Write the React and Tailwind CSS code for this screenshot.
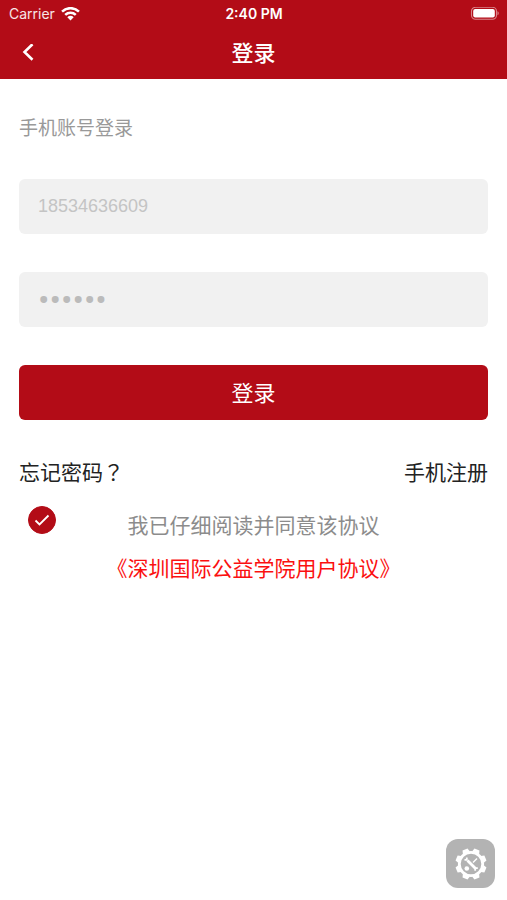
import { useState } from "react";

function StatusBar() {
    return (
        <div className="grid grid-cols-3 items-center h-7 pl-[9px] pr-2">
            <div className="flex items-center gap-1.5">
                <span className="font-['Inter','Liberation_Sans',sans-serif] text-[14px] leading-5 text-white/90">Carrier</span>
                <svg className="w-[19px] h-[15px]" viewBox="0 0 18 14" fill="none" stroke="white" strokeWidth="2.4">
                    <path d="M1 4.2a11.6 11.6 0 0 1 16 0" />
                    <path d="M4 7.4a7.2 7.2 0 0 1 10 0" />
                    <path d="M9 12.6 6 9.5a4.3 4.3 0 0 1 6 0z" fill="white" stroke="none" />
                </svg>
            </div>
            <span className="text-center font-['Inter','Liberation_Sans',sans-serif] text-[14px] leading-5 font-semibold text-white">2:40 PM</span>
            <svg className="justify-self-end w-[30px] h-[14px]" viewBox="0 0 30 14">
                <rect x="2.5" y="0.3" width="25" height="12" rx="4" fill="none" stroke="white" strokeOpacity="0.5" strokeWidth="1.1" />
                <rect x="4.2" y="2" width="21.6" height="8.6" rx="2" fill="white" />
                <path d="M28.5 4.3v4c1.6-.6 1.6-3.4 0-4z" fill="white" fillOpacity="0.5" />
            </svg>
        </div>
    );
}

function ToolIcon() {
    return (
        <svg className="w-[34px] h-[34px]" viewBox="-17 -17 34 34" fill="none" stroke="white">
            <circle r="11.7" strokeWidth="2.8" />
            <g fill="white" stroke="none">
                {[22.5, 67.5, 112.5, 157.5, 202.5, 247.5, 292.5, 337.5].map((deg) => (
                    <path key={deg} d="M-3.8-12 -2.7-15.6h5.4L3.8-12z" transform={`rotate(${deg})`} />
                ))}
            </g>
            <path d="M-3.5-3.5 4.5 4.5" strokeWidth="2.8" />
            <path d="M-6.5-4.2-4.2-4.2-4.2-6.5M4.2 6.8 4.2 4.2 6.8 4.2" strokeWidth="1.8" />
            <path d="M2-1.6 6-5.6" strokeWidth="1.4" />
            <circle cx="-4.2" cy="4.5" r="2.3" fill="white" stroke="none" />
        </svg>
    );
}

export default function App() {
    const [phone, setPhone] = useState("");
    const [password, setPassword] = useState("123456");
    const [agreed, setAgreed] = useState(true);

    const handleSubmit = (e) => {
        e.preventDefault();
    };

    return (
        <div className="relative min-h-screen bg-white font-['Liberation_Sans','Noto_Sans_CJK_SC',sans-serif]">
            <header className="bg-[#b30c17]">
                <StatusBar />
                <div className="grid grid-cols-3 items-center h-[51px] px-5">
                    <button type="button" aria-label="返回" className="justify-self-start flex items-center w-6 h-8 cursor-pointer">
                        <svg className="w-4 h-5" viewBox="0 0 16 20" fill="none" stroke="white" strokeWidth="2.6">
                            <path d="M12.5 0.2 4.5 8l8 7.8" />
                        </svg>
                    </button>
                    <h1 className="text-center text-[22px] leading-8 font-medium text-white">登录</h1>
                </div>
            </header>

            <main className="px-[19px] pt-[34px]">
                <h2 className="text-[19px] leading-8 text-[#999999]">手机账号登录</h2>

                {/* Login form */}
                <form onSubmit={handleSubmit} className="flex flex-col gap-[38px] mt-[34px]">
                    <input
                        type="tel"
                        aria-label="手机号"
                        value={phone}
                        onChange={(e) => setPhone(e.target.value)}
                        placeholder="18534636609"
                        className="w-full h-[55px] px-[19px] rounded-md bg-[#f1f1f1] text-[18px] text-[#333333] placeholder-[#c4c4c4] outline-none"
                    />
                    <input
                        type="password"
                        aria-label="密码"
                        value={password}
                        onChange={(e) => setPassword(e.target.value)}
                        className="w-full h-[55px] px-[19px] rounded-md bg-[#f1f1f1] font-[Roboto,sans-serif] text-[34px] text-[#bbbbbb] outline-none"
                    />
                    <button type="submit" className="w-full h-[55px] pt-0.5 rounded-md bg-[#b30c17] text-[22px] text-white cursor-pointer">
                        登录
                    </button>
                </form>

                <div className="flex items-center justify-between mt-[37px] text-[21px] leading-8 text-[#222222]">
                    <a href="#forgot">
                        忘记密码<span className="font-['Noto_Sans_CJK_TC',sans-serif] leading-none" lang="zh-TW">？</span>
                    </a>
                    <a href="#register">手机注册</a>
                </div>

                <div className="grid grid-cols-[28px_1fr_28px] items-start px-[9px] mt-[17px]">
                    <span className="relative flex w-7 h-7">
                        <input
                            id="agree"
                            type="checkbox"
                            checked={agreed}
                            onChange={(e) => setAgreed(e.target.checked)}
                            className="peer appearance-none w-7 h-7 rounded-full border border-[#b30c17] checked:bg-[#b30c17] cursor-pointer"
                        />
                        <svg className="absolute inset-0 w-7 h-7 pointer-events-none opacity-0 peer-checked:opacity-100" viewBox="0 0 28 28" fill="none" stroke="white" strokeWidth="1.8">
                            <path d="M7.5 14.5l4 4L20.5 9.5" />
                        </svg>
                    </span>
                    <label htmlFor="agree" className="pt-1 text-center text-[21px] leading-8 text-[#8c8c8c] cursor-pointer">我已仔细阅读并同意该协议</label>
                </div>
                <a href="#agreement" className="block mt-[11px] text-center text-[21px] leading-8 text-[#fb1010]">《深圳国际公益学院用户协议》</a>
            </main>

            <button type="button" aria-label="工具" className="fixed right-3 bottom-3 flex items-center justify-center w-[49px] h-[49px] rounded-xl bg-[#b3b3b3] cursor-pointer">
                <ToolIcon />
            </button>
        </div>
    );
}
